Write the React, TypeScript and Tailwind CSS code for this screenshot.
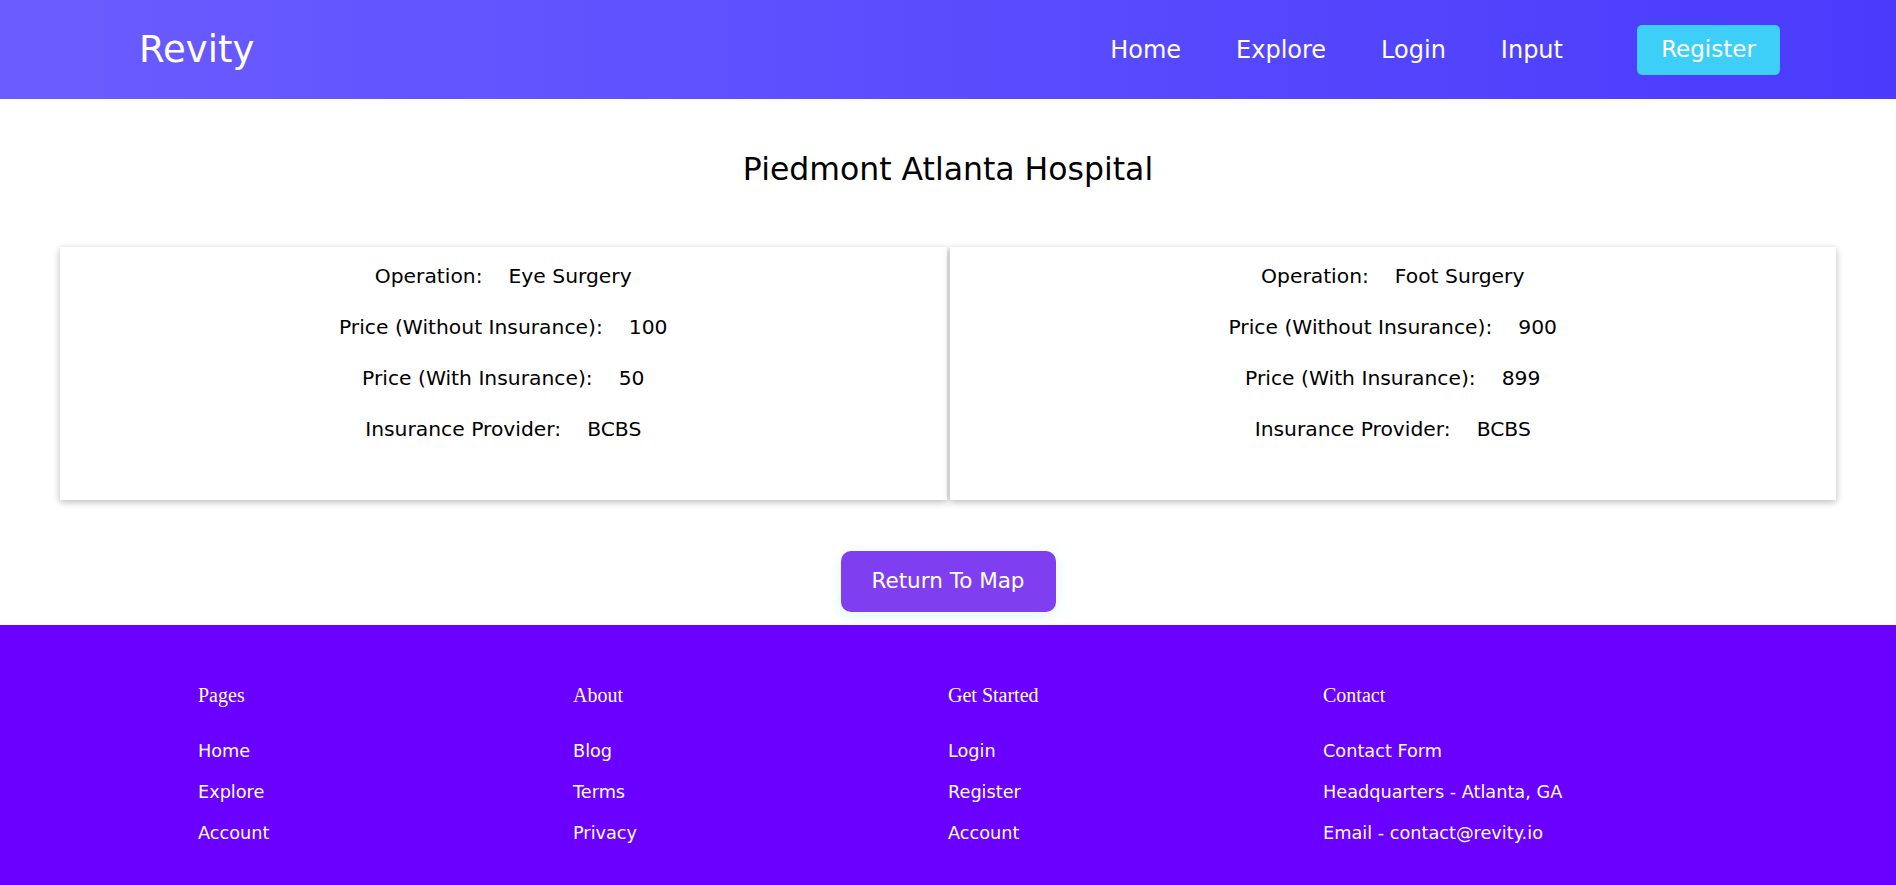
const navLinks = ["Home", "Explore", "Login", "Input"];

const procedures = [
  { operation: "Eye Surgery", without: "100", withIns: "50", provider: "BCBS" },
  { operation: "Foot Surgery", without: "900", withIns: "899", provider: "BCBS" },
];

const footerCols = [
  { title: "Pages", links: ["Home", "Explore", "Account"] },
  { title: "About", links: ["Blog", "Terms", "Privacy"] },
  { title: "Get Started", links: ["Login", "Register", "Account"] },
  { title: "Contact", links: ["Contact Form", "Headquarters - Atlanta, GA", "Email - contact@revity.io"] },
];

function Row({ label, value }: { label: string; value: string }) {
  return (
    <p className="text-[20.3px] leading-[26px] text-black">
      {label}
      <span className="ml-[26px]">{value}</span>
    </p>
  );
}

export default function App() {
  return (
    <div className="flex min-h-[885px] flex-col bg-white font-['DejaVu_Sans',sans-serif]">
      <header className="flex h-[99px] items-center justify-between bg-gradient-to-r from-[#6b5cff] to-[#4b3afc] pl-[139px] pr-[116px] text-white">
        <span className="text-[37px] leading-none">Revity</span>
        <nav className="flex items-center">
          <div className="flex items-center gap-[55px]">
            {navLinks.map((link) => (
              <a key={link} className="text-[24px] leading-none">
                {link}
              </a>
            ))}
          </div>
          <button className="ml-[74px] h-[50px] w-[143px] rounded-[5px] bg-[#3ecff9] text-[23px] text-white">
            Register
          </button>
        </nav>
      </header>

      <main className="flex flex-col items-center">
        <h1 className="mt-[52px] text-center text-[31.5px] leading-[36px] text-black">
          Piedmont Atlanta Hospital
        </h1>

        <div className="mt-[60px] flex w-full gap-[3px] px-[60px]">
          {procedures.map((p) => (
            <div
              key={p.operation}
              className="flex flex-1 flex-col items-center gap-[25px] bg-white pt-[16px] pb-[58px] shadow-[0_2px_7px_rgba(0,0,0,0.28)]"
            >
              <Row label="Operation:" value={p.operation} />
              <Row label="Price (Without Insurance):" value={p.without} />
              <Row label="Price (With Insurance):" value={p.withIns} />
              <Row label="Insurance Provider:" value={p.provider} />
            </div>
          ))}
        </div>

        <button className="mt-[51px] mb-[13px] h-[61px] w-[215px] rounded-[10px] bg-[#7f3ff0] text-[21.5px] text-white shadow-[0_4px_14px_rgba(0,190,190,0.14)]">
          Return To Map
        </button>
      </main>

      <footer className="flex-1 bg-[#6a00ff] pt-[59px] pb-[30px] text-white">
        <div className="mx-auto grid w-[1500px] grid-cols-4">
          {footerCols.map((col) => (
            <div key={col.title}>
              <h4 className="font-['Liberation_Serif',serif] text-[20px] leading-[22px]">{col.title}</h4>
              <ul className="mt-[34px] flex flex-col gap-[19px]">
                {col.links.map((l) => (
                  <li key={l} className="text-[17.7px] leading-[22px]">
                    {l}
                  </li>
                ))}
              </ul>
            </div>
          ))}
        </div>
      </footer>
    </div>
  );
}
